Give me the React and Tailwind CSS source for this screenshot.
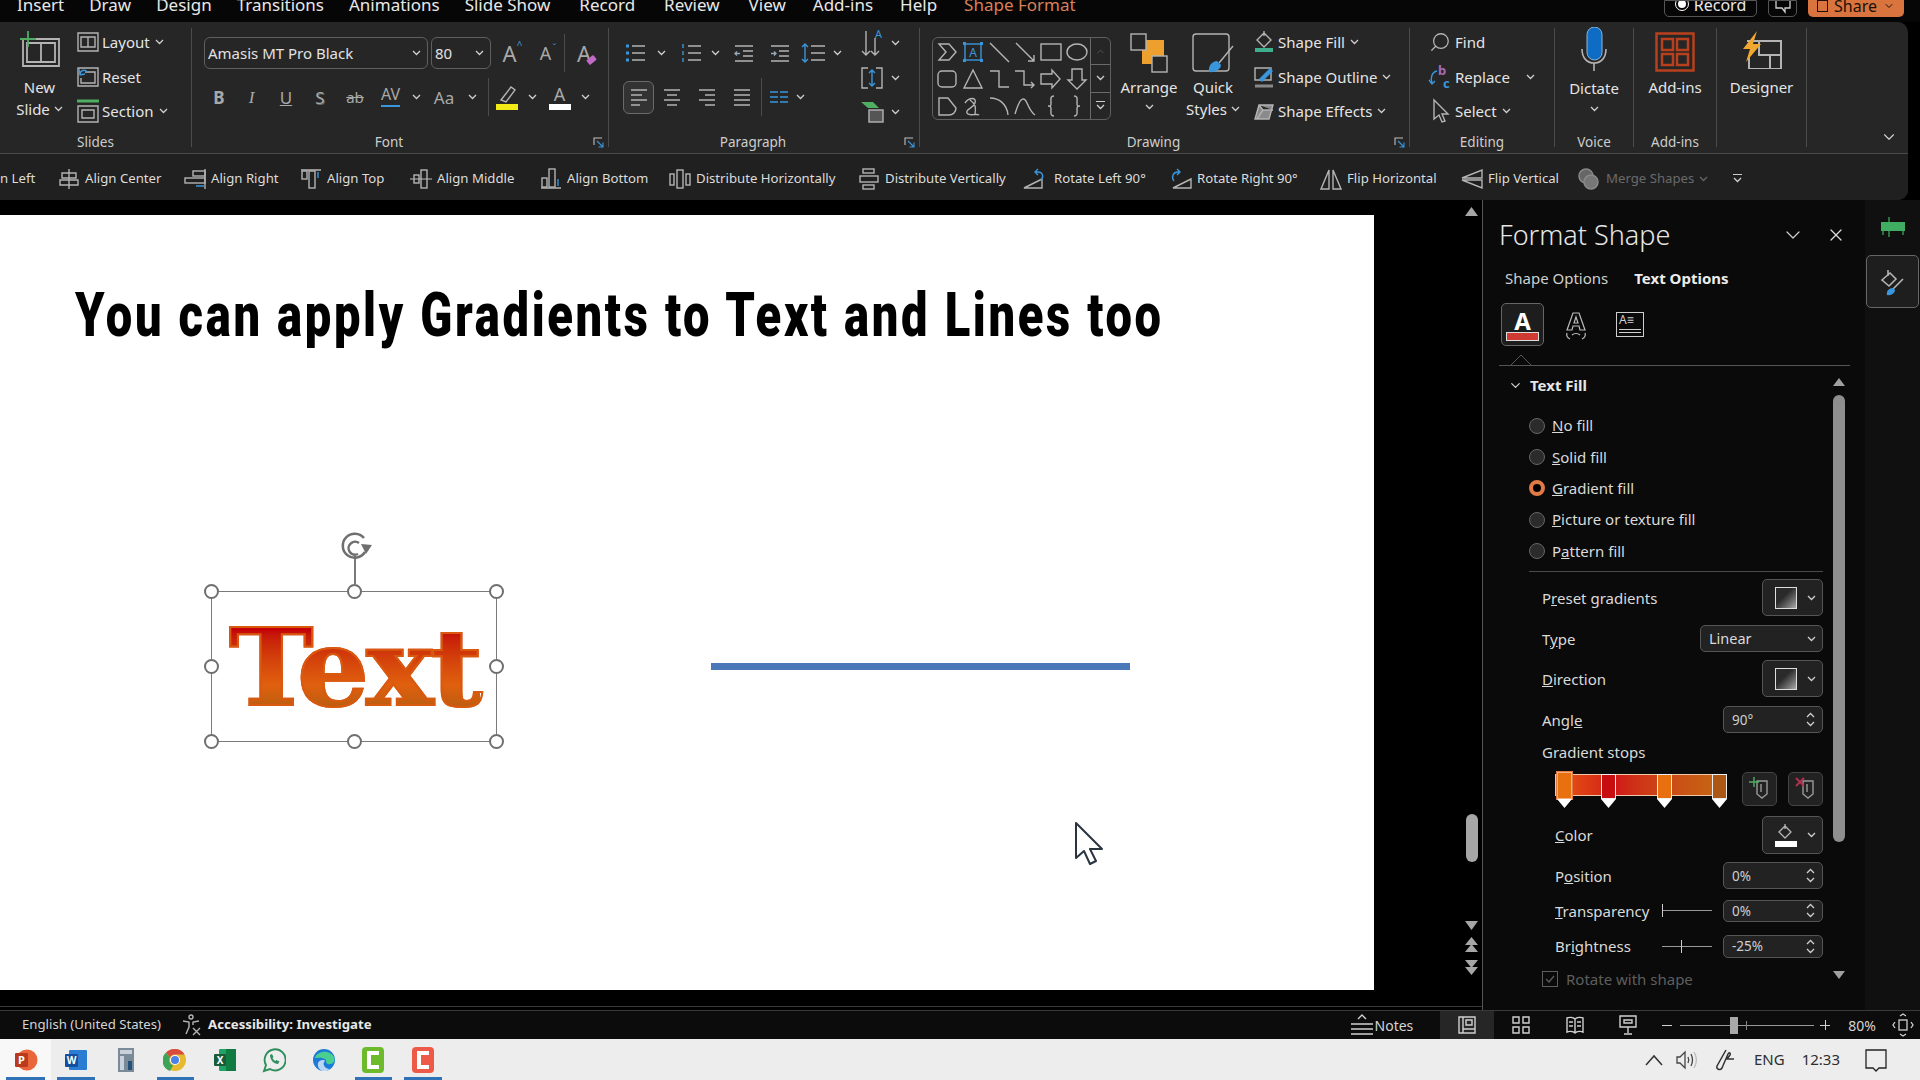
import React from "react";
import { ChevronDown, ChevronUp, X, Search } from "lucide-react";

const G = "#b4b4b4";
const B = "#3a96dc";

const Chev = ({ className = "" }) => (
  <svg width="9" height="6" viewBox="0 0 9 6" className={"shrink-0 " + className}>
    <path d="M1 1l3.5 3.5L8 1" fill="none" stroke="#cfcfcf" strokeWidth="1.3" />
  </svg>
);

const Ico = ({ w = 22, h = 22, children, className = "" }) => (
  <svg width={w} height={h} viewBox={`0 0 ${w} ${h}`} fill="none" stroke={G} strokeWidth="1.4" className={"shrink-0 " + className}>
    {children}
  </svg>
);

const Launcher = () => (
  <svg width="11" height="11" viewBox="0 0 11 11" fill="none" stroke="#c0c0c0" strokeWidth="1.1" className="absolute right-[4px] bottom-[-1px]">
    <path d="M1 8V1h8" />
    <path d="M4 4l5.5 5.5M10 5.5V10H5.5" stroke={B} />
  </svg>
);

function Group({ w, label, launcher, labelCls = "", children }) {
  return (
    <div className={"relative flex flex-col shrink-0 border-r border-[#4c4c4c] " + w}>
      <div className="flex-1 flex">{children}</div>
      <div className={"h-[12px] flex items-center justify-center text-[13.5px] text-[#cdcdcd] mb-[-1px] " + labelCls}>{label}</div>
      {launcher && <Launcher />}
    </div>
  );
}

const Row3 = ({ icon, text, chev = true, cls = "", iw = "w-[29px]" }) => (
  <div className={"h-[34.5px] flex items-center " + cls}>
    <span className={"flex justify-center " + iw}>{icon}</span>
    <span className="text-[15px] text-[#e4e4e4] mr-[5px] whitespace-nowrap">{text}</span>
    {chev && <Chev />}
  </div>
);

const Cell = ({ w, children }) => <div className={"flex items-center justify-center shrink-0 " + w}>{children}</div>;

const TB = ({ children, cls = "" }) => <span className={"text-[#a9a9a9] leading-none " + cls}>{children}</span>;

const ListIcon = ({ kind }) => (
  <Ico w={26} h={24}>
    {[5, 12, 19].map((y, i) => (
      <g key={y}>
        <path d={`M9 ${y}h13`} />
        {kind === "bullet" && <rect x="3" y={y - 1.5} width="3" height="3" fill={B} stroke="none" />}
        {kind === "number" && <path d={`M4 ${y - 2}v4`} stroke={B} />}
      </g>
    ))}
  </Ico>
);

const IndentIcon = ({ dir }) => (
  <Ico w={24} h={22}>
    <path d="M3 4h18M11 9h10M11 14h10M3 19h18" />
    <path d={dir === "in" ? "M3 11.5h5M6 9.5l2 2-2 2" : "M8 11.5H3M5 9.5l-2 2 2 2"} stroke="#8fa7b8" />
  </Ico>
);

const AlignIcon = ({ lines }) => (
  <Ico w={20} h={20}>
    {lines.map((d) => (
      <path key={d} d={d} strokeWidth="1.7" />
    ))}
  </Ico>
);

const shapes = [
  <path d="M3 3h10l7 8-7 8H3l7-8z" />,
  <g><rect x="3" y="3" width="16" height="16" stroke={B} /><text x="11" y="16" fontSize="12" textAnchor="middle" fill={B} stroke="none">A</text><rect x="1" y="1" width="3" height="3" fill={B} stroke="none" /><rect x="18" y="1" width="3" height="3" fill={B} stroke="none" /><rect x="1" y="18" width="3" height="3" fill={B} stroke="none" /><rect x="18" y="18" width="3" height="3" fill={B} stroke="none" /></g>,
  <path d="M2 2l19 19" />,
  <path d="M2 2l18 18M20 14v6h-6" />,
  <rect x="1" y="3" width="20" height="16" />,
  <ellipse cx="11" cy="11" rx="10" ry="8" />,
  <rect x="2" y="3" width="18" height="16" rx="4" />,
  <path d="M11 2l9 18H2z" />,
  <path d="M2 3h9v16h10" />,
  <path d="M1 3h9v14h10M17 14l3 3-3 3" />,
  <path d="M1 6h11V2l8 9-8 9v-4H1z" />,
  <path d="M6 1h10v11h4l-9 9-9-9h4z" />,
  <path d="M3 3h9l8 10c0 4-3 7-7 7H3z" />,
  <path d="M3 8c4-6 12-6 10 0s-10 6-8 10 10 0 12 2M8 5c6 4 6 8 5 14" />,
  <path d="M2 3c9 0 17 6 18 17" />,
  <path d="M1 19C6 2 10 1 13 8s5 10 8 12" />,
  <path d="M14 1c-4 0-3 3-3 7s-1 3-3 3c2 0 3 0 3 3s-1 7 3 7" />,
  <path d="M8 1c4 0 3 3 3 7s1 3 3 3c-2 0-3 0-3 3s1 7-3 7" />,
];

const qat = [
  ["w-[126px]", "gap-[5px]", "Align Center", <><path d="M11 1v20M4 5h14v5H4zM2 12h18v5H2z" /></>],
  ["w-[116px]", "gap-[5px]", "Align Right", <><path d="M21 1v20" /><rect x="9" y="3" width="12" height="5" /><rect x="1" y="10" width="20" height="5" /><path d="M12 18h8" stroke={B} /></>],
  ["w-[110px]", "gap-[5px]", "Align Top", <><path d="M1 2h20" /><rect x="2" y="3" width="5" height="8" /><rect x="9" y="3" width="6" height="17" /><path d="M18 10V4" stroke={B} /></>],
  ["w-[130px]", "gap-[5px]", "Align Middle", <><path d="M0 11h22" stroke="#8a8a8a" /><rect x="4" y="7" width="5" height="8" /><rect x="11" y="2" width="6" height="18" /></>],
  ["w-[129px]", "gap-[5px]", "Align Bottom", <><path d="M1 20h20" /><rect x="2" y="10" width="5" height="9" /><rect x="9" y="1" width="6" height="18" /><path d="M18 11v7" stroke={B} /></>],
  ["w-[189px]", "gap-[5px]", "Distribute Horizontally", <><rect x="1" y="6" width="4" height="11" /><rect x="8" y="2" width="6" height="18" /><rect x="17" y="6" width="4" height="11" /></>],
  ["w-[165px]", "gap-[5px]", "Distribute Vertically", <><rect x="5" y="1" width="11" height="4" /><rect x="2" y="8" width="18" height="6" /><rect x="5" y="17" width="11" height="4" /></>],
  ["w-[147px]", "gap-[9px]", "Rotate Left 90°", <><path d="M1 20L19 11v9z" /><path d="M18 12c3-3 2-8-3-8h-2M15 1l-3 3 3 3" stroke={B} /></>],
  ["w-[150px]", "gap-[5px]", "Rotate Right 90°", <><path d="M21 20L3 20l18-9z" /><path d="M4 13C1 9 3 4 8 4h2M7 1l3 3-3 3" stroke={B} /></>],
  ["w-[141px]", "gap-[5px]", "Flip Horizontal", <><path d="M9 2v19H1zM13 2v19h8z" /></>],
  ["w-[116px]", "gap-[5px]", "Flip Vertical", <><path d="M21 2v8H1zM21 20v-8H1z" /></>],
];

const Spin = ({ value }) => (
  <div className="w-[100px] h-full bg-[#222] border border-[#555] rounded-[5px] flex items-center justify-between pl-[8px] pr-[4px] text-[13.5px] text-[#cfcfcf]">
    <span>{value}</span>
    <span className="flex flex-col gap-[3px] mr-[3px]">
      <Chev className="rotate-180" />
      <Chev />
    </span>
  </div>
);

const DropBtn = ({ children }) => (
  <div className="w-[61px] h-full bg-[#222] border border-[#555] rounded-[5px] flex items-center justify-between pl-[12px] pr-[6px]">
    {children}
    <Chev />
  </div>
);

const GradSwatch = () => <div className="w-[22px] h-[22px] border border-[#ddd] bg-gradient-to-br from-[#2a2a2a] from-40% to-[#aaa]" />;

const Radio = ({ on, children }) => (
  <div className="h-[31.3px] flex items-center gap-[7px] pl-[30px] text-[15px] text-[#dadada]">
    <span className={on ? "w-[16px] h-[16px] rounded-full border-[4px] border-[#e07b45] bg-black" : "w-[16px] h-[16px] rounded-full border border-[#666] bg-[#2b2b2b]"} />
    <span>{children}</span>
  </div>
);

const FRow = ({ h, mt, indent = "pl-[43px]", label, children }) => (
  <div className={"flex items-center justify-between text-[15px] text-[#dadada] " + h + " " + mt + " " + indent}>
    <span className="whitespace-nowrap">{label}</span>
    {children}
  </div>
);

const Stop = ({ pos, color, selected }) => (
  <div className={"absolute flex flex-col items-center " + (selected ? "-top-[3px] " : "-top-[1px] ") + pos}>
    <div className={"w-[15px] border " + color + (selected ? " h-[27px] border-[#f4b183] outline outline-1 outline-[#e07b45]" : " h-[25px] border-[#eee]")} />
    <svg width="15" height="9" viewBox="0 0 15 9"><path d="M0 0h15L7.500 9z" fill="#fff" /></svg>
  </div>
);

const StopBtn = ({ color, mark }) => (
  <div className="w-[35px] h-[34px] bg-[#222] border border-[#444] rounded-[5px] flex items-center justify-center">
    <svg width="24" height="26" viewBox="0 0 24 26" fill="none" stroke="#9a9a9a" strokeWidth="1.4">
      <path d="M9 5h10v13l-5 4-5-4zM13 8v8" />
      {mark === "add" ? <path d="M1 6h10M6 1v10" stroke={color} /> : <path d="M2 2l8 8M10 2l-8 8" stroke={color} strokeWidth="2" />}
    </svg>
  </div>
);

const Task = ({ w = "w-[49.500px]", bar, active, children }) => (
  <div className={"relative h-full flex items-center justify-center shrink-0 " + w + (active ? " bg-[#f8f8f8]" : "")}>
    {children}
    {bar && <div className="absolute bottom-0 left-[6px] right-[6px] h-[3px] bg-[#2f72b8]" />}
  </div>
);

const menu = [
  ["Insert", ""],
  ["Draw", ""],
  ["Design", ""],
  ["Transitions", ""],
  ["Animations", ""],
  ["Slide Show", ""],
  ["Record", "ml-[4px]"],
  ["Review", "ml-[4px]"],
  ["View", "ml-[4px]"],
  ["Add-ins", "ml-[2px]"],
  ["Help", "ml-[2px]"],
  ["Shape Format", "ml-[2px] text-[#d9805a]"],
];

export default function App() {
  return (
    <div className="w-[1920px] h-[1080px] overflow-hidden flex flex-col bg-black [font-family:'Noto_Sans',sans-serif]">
      {/* title / tabs */}
      <div className="h-[22px] flex shrink-0 bg-[#060606] overflow-hidden">
        <div className="flex gap-[25px] pl-[17px] text-[17px] leading-[10px] h-[10px] text-[#e8e8e8]">
          {menu.map(([t, cls]) => (
            <span key={t} className={"whitespace-nowrap " + cls}>{t}</span>
          ))}
        </div>
        <div className="ml-auto mr-[16px] flex h-[17px] gap-[11px]">
          <div className="w-[93px] border border-[#555] rounded-b-[5px] flex items-end justify-center gap-[5px] overflow-hidden pb-[5px] text-[16px] leading-[12px] text-[#e8e8e8]">
            <span className="w-[14px] h-[14px] rounded-full border border-white flex items-center justify-center"><span className="w-[8px] h-[8px] rounded-full bg-white" /></span>
            Record
          </div>
          <div className="w-[29px] border border-[#555] rounded-b-[5px] flex items-end justify-center overflow-hidden pb-[2px]">
            <svg width="16" height="14" viewBox="0 0 16 14" fill="none" stroke="#cfcfcf" strokeWidth="1.300"><path d="M1 0v8h6l3 4V8h5V0" /></svg>
          </div>
          <div className="w-[96px] rounded-b-[5px] bg-[#d9743f] flex items-end justify-center gap-[6px] overflow-hidden pb-[5px] text-[16px] leading-[12px] text-[#201008]">
            <span className="w-[11px] h-[12px] border border-[#201008]" />
            Share
            <ChevronDown size={12} />
          </div>
        </div>
      </div>

      {/* ribbon */}
      <div className="h-[178px] w-[1908px] shrink-0 flex flex-col rounded-r-[10px] overflow-hidden bg-[#262626]">
        <div className="h-[132px] shrink-0 py-[6px] flex relative border-b border-[#4a4a4a]">
          <Group w="w-[192px]" label="Slides">
            <div className="w-[76px] shrink-0 flex flex-col items-center pl-[3px] text-[15px] leading-[22px] text-[#e4e4e4]">
              <Ico w={42} h={36} className="mt-[3px]">
                <path d="M4 8h36v27H4zM8 12h28v19H8zM22 12v19" strokeWidth="1.800" />
                <path d="M9 0v16M1 8h16" stroke="#4fae62" strokeWidth="1.800" />
              </Ico>
              <span className="mt-[9px]">New</span>
              <span className="flex items-center gap-[4px]">Slide <Chev /></span>
            </div>
            <div className="-mt-[3px] -ml-[3px]">
              <Row3 text="Layout" icon={<Ico w={24} h={22}><path d="M2 2h20v18H2zM5 6h14v10H5zM12 6v10" /></Ico>} />
              <Row3 text="Reset" chev={false} icon={<Ico w={24} h={22}><path d="M2 2h20v18H2zM9 6h10v11H5v-5" /><path d="M4 9c0-5 5-6 7-3M3 3l1 6 5-1" stroke={B} /></Ico>} />
              <Row3 text="Section" icon={<Ico w={24} h={26}><path d="M1 3h22" stroke="#4fae62" strokeWidth="3" /><path d="M2 8h20v16H2zM6 12h12v8H6z" /></Ico>} />
            </div>
          </Group>

          <Group w="w-[417px]" label="Font" launcher labelCls="pr-[22px]">
            <div className="flex flex-col pt-[9px] pl-[12px]">
              <div className="flex items-center h-[32px]">
                <div className="w-[224px] h-full border border-[#5f5f5f] rounded-[6px] flex items-center justify-between pl-[3px] pr-[6px] text-[15px] text-[#e2e2e2]">
                  Amasis MT Pro Black <Chev />
                </div>
                <div className="ml-[3px] w-[60px] h-full border border-[#5f5f5f] rounded-[6px] flex items-center justify-between pl-[3px] pr-[6px] text-[15px] text-[#e2e2e2]">
                  80 <Chev />
                </div>
                <Cell w="w-[37px]"><TB cls="text-[22px] relative">A<span className="absolute -right-[6px] -top-[2px] text-[10px] text-[#4a9ad6]">^</span></TB></Cell>
                <Cell w="w-[35px]"><TB cls="text-[18px] relative">A<span className="absolute -right-[5px] -top-[1px] text-[9px] text-[#4a9ad6]">ˇ</span></TB></Cell>
                <div className="w-px h-[38px] bg-[#4c4c4c] mx-[1px]" />
                <Cell w="w-[36px]"><TB cls="text-[22px] relative">A<span className="absolute -right-[5px] bottom-[1px] w-[9px] h-[6px] rotate-[-40deg] rounded-[1px] bg-[#c269c8]" /></TB></Cell>
              </div>
              <div className="flex items-center h-[42px] mt-[7px]">
                <Cell w="w-[30px]"><TB cls="font-bold text-[17px]">B</TB></Cell>
                <Cell w="w-[35px]"><TB cls="italic text-[17px] [font-family:'Liberation_Serif',serif]">I</TB></Cell>
                <Cell w="w-[34px]"><TB cls="underline text-[17px]">U</TB></Cell>
                <Cell w="w-[34px]"><TB cls="text-[17px] [text-shadow:1px_1px_0_#666]">S</TB></Cell>
                <Cell w="w-[36px]"><TB cls="line-through text-[15px]">ab</TB></Cell>
                <Cell w="w-[35px]"><TB cls="text-[16px] relative -top-[3px]">AV<span className="absolute left-0 right-0 -bottom-[5px] h-[2px] bg-[#3a96dc]" /></TB></Cell>
                <Cell w="w-[16px]"><Chev /></Cell>
                <Cell w="w-[40px]"><TB cls="text-[17px]">Aa</TB></Cell>
                <Cell w="w-[17px]"><Chev /></Cell>
                <div className="w-px h-[38px] bg-[#4c4c4c] mx-[7px]" />
                <Cell w="w-[22px]">
                  <Ico w={22} h={26}><path d="M5 16L15 3l4 3L10 18z" /><rect x="0" y="20" width="22" height="6" fill="#f2ea16" stroke="none" /></Ico>
                </Cell>
                <Cell w="w-[28px]"><Chev /></Cell>
                <Cell w="w-[27px]">
                  <div className="flex flex-col items-center"><TB cls="text-[18px]">A</TB><span className="w-[22px] h-[6px] bg-white mt-[1px]" /></div>
                </Cell>
                <Cell w="w-[24px]"><Chev /></Cell>
              </div>
            </div>
          </Group>

          <Group w="w-[311px]" label="Paragraph" launcher labelCls="pr-[22px]">
            <div className="flex flex-col pt-[9px] pl-[14px] w-[240px]">
              <div className="flex items-center h-[32px]">
                <ListIcon kind="bullet" /><Cell w="w-[24px]"><Chev /></Cell>
                <Cell w="w-[6px]" /><ListIcon kind="number" /><Cell w="w-[20px]"><Chev /></Cell>
                <Cell w="w-[38px]"><IndentIcon dir="out" /></Cell>
                <Cell w="w-[34px]"><IndentIcon dir="in" /></Cell>
                <Cell w="w-[34px]">
                  <Ico w={26} h={24}><path d="M10 5h14M10 12h14M10 19h14" /><path d="M4 3v18M1 6l3-3 3 3M1 18l3 3 3-3" stroke={B} /></Ico>
                </Cell>
                <Cell w="w-[12px]"><Chev /></Cell>
              </div>
              <div className="flex items-center h-[42px] mt-[7px]">
                <div className="w-[31px] h-[33px] rounded-[6px] border border-[#6a6a6a] bg-[#333] flex items-center justify-center">
                  <AlignIcon lines={["M2 3h16", "M2 8h11", "M2 13h16", "M2 18h9"]} />
                </div>
                <Cell w="w-[35px]"><AlignIcon lines={["M2 3h16", "M5 8h10", "M2 13h16", "M5 18h10"]} /></Cell>
                <Cell w="w-[35px]"><AlignIcon lines={["M2 3h16", "M8 8h10", "M2 13h16", "M8 18h10"]} /></Cell>
                <Cell w="w-[35px]"><AlignIcon lines={["M2 3h16", "M2 8h16", "M2 13h16", "M2 18h16"]} /></Cell>
                <div className="w-px h-[38px] bg-[#4c4c4c] ml-[2px] mr-[8px]" />
                <Ico w={18} h={14}><path d="M0 2h8M0 7h8M0 12h8M10 2h8M10 7h8M10 12h8" stroke={B} strokeWidth="1.600" /></Ico>
                <Cell w="w-[24px]"><Chev /></Cell>
              </div>
            </div>
            <div className="-mt-[2px] pl-[11px]">
              {[
                <Ico w={24} h={30} key="1"><path d="M6 3v24M2 23l4 4 4-4M15 10v17M11 23l4 4 4-4" /><text x="15" y="10" fontSize="11" fill={B} stroke="none">A</text></Ico>,
                <Ico w={24} h={26} key="2"><path d="M8 3H2v20h6M16 3h6v20h-6" /><path d="M12 6v14M9 8l3-3 3 3M9 18l3 3 3-3" stroke={B} /></Ico>,
                <Ico w={24} h={26} key="3"><path d="M1 3h12l6 6H8z" fill="#4fae62" stroke="none" /><rect x="9" y="11" width="14" height="12" fill="#555" /></Ico>,
              ].map((ic, i) => (
                <div key={i} className="h-[34.500px] flex items-center gap-[7px]">{ic}<Chev /></div>
              ))}
            </div>
          </Group>

          <Group w="w-[490px]" label="Drawing" launcher labelCls="pr-[22px]">
            <div className="ml-[12px] mt-[9px] w-[179px] h-[83px] shrink-0 border border-[#5f5f5f] rounded-[6px] flex">
              <div className="flex-1 grid grid-cols-6 items-center justify-items-center pl-[1px]">
                {shapes.map((s, i) => (
                  <Ico key={i} w={22} h={22}>{s}</Ico>
                ))}
              </div>
              <div className="w-[20px] border-l border-[#6a6a6a] flex flex-col">
                <div className="flex-1 flex items-center justify-center"><ChevronUp size={11} color="#555" /></div>
                <div className="flex-1 flex items-center justify-center border-y border-[#6a6a6a]"><Chev /></div>
                <div className="flex-1 flex flex-col items-center justify-center gap-[2px]"><span className="w-[9px] h-px bg-[#ccc]" /><Chev /></div>
              </div>
            </div>
            <div className="w-[78px] shrink-0 ml-[-1px] flex flex-col items-center text-[15px] leading-[22px] text-[#e4e4e4]">
              <Ico w={42} h={42} className="mt-[4px]">
                <rect x="14" y="8" width="22" height="24" fill="#eda02d" stroke="none" />
                <rect x="3" y="2" width="15" height="16" fill="#262626" />
                <rect x="24" y="24" width="15" height="16" fill="#262626" />
              </Ico>
              <span className="mt-[2px]">Arrange</span>
              <Chev className="mt-[6px]" />
            </div>
            <div className="w-[50px] shrink-0 flex flex-col items-center text-[15px] leading-[22px] text-[#e4e4e4]">
              <Ico w={44} h={42} className="mt-[4px]">
                <rect x="2" y="2" width="36" height="37" rx="3" />
                <path d="M42 14L28 31" />
                <path d="M18 40c-1-6 3-11 8-11l4 4c0 4-6 8-12 7z" fill={B} stroke="none" />
              </Ico>
              <span className="mt-[2px]">Quick</span>
              <span className="flex items-center gap-[4px] whitespace-nowrap">Styles <Chev /></span>
            </div>
            <div className="-mt-[3px] ml-[11px]">
              <Row3 text="Shape Fill" icon={<Ico w={22} h={24}><path d="M4 10l7-7 7 7-7 7zM11 1v5" /><path d="M2 20h18" stroke="#3fae8c" strokeWidth="4" /></Ico>} />
              <Row3 text="Shape Outline" icon={<Ico w={22} h={24}><path d="M2 3h16v12H2z" /><path d="M6 14L17 3l3 3L9 17z" fill={B} stroke="none" /><path d="M2 21h18" stroke="#888" strokeWidth="3" /></Ico>} />
              <Row3 text="Shape Effects" icon={<Ico w={22} h={22}><path d="M6 5h14l-4 14H2zM6 5l4 5h10M10 10l-6 9" fill="#8a8a8a" /></Ico>} />
            </div>
          </Group>

          <Group w="w-[145px]" label="Editing">
            <div className="-mt-[3px] pl-[14px]">
              <Row3 iw="w-[31px]" text="Find" chev={false} icon={<Search size={22} color={G} strokeWidth={1.400} className="-scale-x-100" />} />
              <div className="flex items-center h-[34.500px]">
                <span className="w-[31px] flex justify-center">
                  <svg width="24" height="26" viewBox="0 0 24 26" fill="none" strokeWidth="1.400">
                    <text x="10" y="11" fontSize="13" fontWeight="700" fill="#a56bb5" stroke="none">b</text>
                    <text x="15" y="24" fontSize="13" fontWeight="700" fill={B} stroke="none">c</text>
                    <path d="M9 7C4 8 2 14 4 19M1 16l3 4 3-3" stroke={B} />
                  </svg>
                </span>
                <span className="text-[15px] text-[#e4e4e4]">Replace</span>
                <Chev className="ml-[16px]" />
              </div>
              <Row3 iw="w-[31px]" text="Select" icon={<Ico w={20} h={26}><path d="M4 2v19l5-4 3 7 3-1-3-7h6z" /></Ico>} />
            </div>
          </Group>

          <Group w="w-[79px]" label="Voice">
            <div className="w-full flex flex-col items-center text-[15px] text-[#e4e4e4] leading-[22px]">
              <svg width="28" height="44" viewBox="0 0 28 44" fill="none" className="-mt-[1px]">
                <rect x="7" y="0" width="15" height="33" rx="7.500" fill="#0f6cc4" stroke="#8ab8e0" />
                <path d="M2 22c0 9 5 14 12 14s12-5 12-14M14 36v8" stroke={G} strokeWidth="1.600" />
              </svg>
              <span className="mt-[6px]">Dictate</span>
              <Chev className="mt-[7px]" />
            </div>
          </Group>

          <Group w="w-[83px]" label="Add-ins">
            <div className="w-full flex flex-col items-center text-[15px] text-[#e4e4e4] leading-[22px]">
              <svg width="40" height="40" viewBox="0 0 40 40" fill="none" stroke="#b8401c" strokeWidth="2.500" className="mt-[4px]">
                <rect x="1.500" y="1.500" width="37" height="37" />
                <rect x="7" y="7" width="11" height="11" />
                <rect x="22" y="7" width="11" height="11" />
                <rect x="7" y="22" width="11" height="11" />
                <rect x="22" y="22" width="11" height="11" />
              </svg>
              <span className="mt-[4px]">Add-ins</span>
            </div>
          </Group>

          <Group w="w-[90px]" label="">
            <div className="w-full flex flex-col items-center text-[15px] text-[#e4e4e4] leading-[22px]">
              <svg width="42" height="38" viewBox="0 0 42 38" fill="none" className="mt-[3px]">
                <path d="M6 10h34v28H8V26M18 10v14h22M29 24v14" stroke={G} strokeWidth="2" />
                <path d="M16 0L2 18h7l-4 13 15-18h-8z" fill="#f0a92e" />
              </svg>
              <span className="mt-[7px]">Designer</span>
            </div>
          </Group>

          <div className="flex-1 flex items-end justify-end pr-[10px] pb-[1px]">
            <ChevronDown size={18} color="#d0d0d0" strokeWidth={1.500} />
          </div>
        </div>

        {/* quick access row */}
        <div className="flex-1 pt-[3px] bg-[#202020] flex items-center text-[13.2px] text-[#dcdcdc] whitespace-nowrap">
          <span className="w-[58px] shrink-0">n Left</span>
          {qat.map(([w, gap, label, ic]) => (
            <div key={label} className={"flex items-center shrink-0 " + w + " " + gap}>
              <Ico>{ic}</Ico>
              {label}
            </div>
          ))}
          <div className="flex items-center gap-[5px] w-[156px] shrink-0 text-[#6a6a6a]">
            <svg width="24" height="24" viewBox="0 0 24 24" fill="none" stroke="#8a8a8a" strokeWidth="1.500">
              <circle cx="9" cy="9" r="7" fill="#666" />
              <circle cx="14" cy="15" r="7" fill="#777" />
            </svg>
            Merge Shapes
            <Chev className="opacity-40" />
          </div>
          <div className="flex flex-col items-center gap-[2px]">
            <span className="w-[9px] h-px bg-[#ccc]" />
            <Chev />
          </div>
        </div>
      </div>

      {/* work area */}
      <div className="h-[810px] shrink-0 flex">
        <div className="w-[1483px] shrink-0 flex flex-col border-r border-[#555] bg-black">
          <div className="h-[807px] flex border-b border-[#3a3a3a]">
            <div className="w-[1462px] shrink-0 pt-[15px]">
              <div className="relative w-[1374px] h-[775px] bg-white overflow-hidden">
                <div className="pt-[55px] pl-[75px]">
                  <h1 className="origin-left scale-x-[0.76] whitespace-nowrap text-[62px] leading-[90px] font-black text-black tracking-[3.5px] [font-family:Roboto,sans-serif]">
                    You can apply Gradients to Text and Lines too
                  </h1>
                </div>

                {/* selected text box */}
                <div className="absolute left-[211px] top-[376px] w-[286px] h-[151px] border-[1.5px] border-[#7a7a7a] flex items-center justify-center">
                  <span className="scale-x-[1.06] pt-[3px] text-[107px] leading-[120px] font-bold tracking-[-3px] [-webkit-text-stroke:2px_#d9590f] [font-family:'DejaVu_Serif',serif] bg-gradient-to-b from-[#c40008] from-20% via-[#e0600e] via-65% to-[#b85c10] to-85% bg-clip-text text-transparent">
                    Text
                  </span>
                  {["-left-[8px] -top-[8px]", "left-[135px] -top-[8px]", "-right-[8px] -top-[8px]", "-left-[8px] top-[67px]", "-right-[8px] top-[67px]", "-left-[8px] -bottom-[8px]", "left-[135px] -bottom-[8px]", "-right-[8px] -bottom-[8px]"].map((p) => (
                    <span key={p} className={"absolute w-[15px] h-[15px] rounded-full bg-white border-2 border-[#6f6f6f] " + p} />
                  ))}
                  <span className="absolute left-[142px] -top-[36px] w-[1.500px] h-[28px] bg-[#7a7a7a]" />
                  <svg width="36" height="30" viewBox="0 0 36 30" fill="none" stroke="#6f6f6f" strokeWidth="2.500" className="absolute left-[126px] -top-[61px]">
                    <path d="M27 21A12 12 0 1 1 26 7M20 23A6.500 6.500 0 1 1 21 12" />
                    <path d="M23 13l11 1-6 9z" fill="#6f6f6f" stroke="none" />
                  </svg>
                </div>

                {/* line */}
                <div className="absolute left-[711px] top-[448px] w-[419px] h-[7px] bg-[#4a78b8]" />

                {/* mouse cursor */}
                <svg width="32" height="44" viewBox="0 0 32 44" className="absolute left-[1074px] top-[606px]">
                  <path d="M2 2v35l8-7 6 13 6-3-6-12h12z" fill="#fff" stroke="#2a3440" strokeWidth="2" strokeLinejoin="round" />
                </svg>
              </div>
            </div>

            {/* slide scroll bar */}
            <div className="w-[19px] shrink-0 flex flex-col items-center pt-[7px]">
              <svg width="13" height="9" viewBox="0 0 13 9"><path d="M6.500 0l6.500 9H0z" fill="#a6a6a6" /></svg>
              <div className="mt-[598px] w-[12px] h-[48px] rounded-full bg-[#a6a6a6]" />
              <svg width="13" height="9" viewBox="0 0 13 9" className="mt-[59px]"><path d="M0 0h13L6.500 9z" fill="#a6a6a6" /></svg>
              <svg width="13" height="16" viewBox="0 0 13 16" className="mt-[7px]"><path d="M6.500 0L13 8H0zM6.500 7L13 15H0z" fill="#a6a6a6" /></svg>
              <svg width="13" height="16" viewBox="0 0 13 16" className="mt-[6px]"><path d="M0 1h13L6.500 9zM0 8h13L6.500 16z" fill="#a6a6a6" /></svg>
            </div>
          </div>
        </div>

        {/* format pane */}
        <div className="w-[382px] shrink-0 bg-[#0a0a0a] flex flex-col">
          <div className="h-[30px] mt-[20px] pl-[16px] pr-[19px] flex items-center justify-between">
            <span className="text-[27px] font-light text-[#e6e6e6]">Format Shape</span>
            <span className="flex items-center gap-[21px]">
              <ChevronDown size={24} color="#cfcfcf" strokeWidth={1.200} />
              <X size={20} color="#dcdcdc" strokeWidth={1.500} />
            </span>
          </div>
          <div className="h-[22px] mt-[17px] pl-[22px] flex items-center gap-[26px] text-[15px]">
            <span className="text-[#cfcfcf]">Shape Options</span>
            <span className="font-bold text-[#ececec]">Text Options</span>
          </div>
          <div className="h-[43px] mt-[14px] pl-[18px] flex items-center">
            <div className="w-[43px] h-[43px] rounded-[5px] border border-[#666] bg-[#1d1d1d] flex flex-col items-center justify-end pb-[4px]">
              <span className="text-[24px] leading-[22px] font-bold text-white">A</span>
              <span className="w-[33px] h-[9px] bg-[#cf3a32] border border-[#ddd]" />
            </div>
            <Ico w={24} h={30} className="ml-[20px]">
              <path d="M9 3h6l6 17h-5l-1-4H9l-1 4H3zM10 13h4l-2-6z" stroke="#bbb" strokeWidth="1.200" />
              <path d="M3 23c-1 3 1 5 3 6M21 23c1 3-1 5-3 6M8 25c2-2 6-2 8 0" stroke="#bbb" strokeWidth="1.200" />
            </Ico>
            <div className="ml-[28px] w-[28px] h-[25px] border border-[#cfcfcf] flex flex-col items-start px-[2px] text-[12px] leading-[14px] text-[#cfcfcf]">
              <span>A≡</span>
              <span className="w-full h-px bg-[#cfcfcf] mt-[2px]" />
              <span className="w-full h-px bg-[#cfcfcf] mt-[2px]" />
            </div>
          </div>
          <div className="relative h-px mt-[19px] ml-[16px] w-[351px] bg-[#555]">
            <svg width="20" height="10" viewBox="0 0 20 10" className="absolute left-[12px] -top-[10px]"><path d="M0 10L10 0l10 10" fill="#0a0a0a" stroke="#555" /></svg>
          </div>

          <div className="flex">
            <div className="w-[340px] shrink-0 pl-[16px]">
              <div className="h-[20px] mt-[9px] pl-[9px] flex items-center gap-[7px] text-[15px] font-bold text-[#e6e6e6]">
                <ChevronDown size={15} strokeWidth={2} color="#d0d0d0" />
                Text Fill
              </div>
              <div className="mt-[15px]">
                <Radio><u>N</u>o fill</Radio>
                <Radio><u>S</u>olid fill</Radio>
                <Radio on><u>G</u>radient fill</Radio>
                <Radio><u>P</u>icture or texture fill</Radio>
                <Radio>P<u>a</u>ttern fill</Radio>
              </div>
              <div className="h-px mt-[5px] ml-[30px] bg-[#4a4a4a]" />

              <FRow h="h-[37px]" mt="mt-[7px]" label={<>P<u>r</u>eset gradients</>}>
                <DropBtn><GradSwatch /></DropBtn>
              </FRow>
              <FRow h="h-[27px]" mt="mt-[9px]" label={<>T<u>y</u>pe</>}>
                <div className="w-[123px] h-full bg-[#222] border border-[#555] rounded-[5px] flex items-center justify-between pl-[8px] pr-[6px] text-[14.5px] text-[#dadada]">
                  Linear <Chev />
                </div>
              </FRow>
              <FRow h="h-[37px]" mt="mt-[8px]" label={<><u>D</u>irection</>}>
                <DropBtn><GradSwatch /></DropBtn>
              </FRow>
              <FRow h="h-[27px]" mt="mt-[9px]" label={<>Angl<u>e</u></>}>
                <Spin value="90°" />
              </FRow>
              <FRow h="h-[20px]" mt="mt-[9px]" label="Gradient stops" />

              <div className="h-[35px] mt-[10px] pl-[56px] flex items-start justify-between">
                <div className="relative mt-[2px] w-[172px] h-[22px] border border-[#f0c8a8] bg-gradient-to-r from-[#e8560e] via-[#d01818] via-35% to-[#c46a12]">
                  <Stop pos="left-[1px]" color="bg-[#e8700e]" selected />
                  <Stop pos="left-[45px]" color="bg-[#c80d10]" />
                  <Stop pos="left-[101px]" color="bg-[#e8700e]" />
                  <Stop pos="left-[156px]" color="bg-[#ac5714]" />
                </div>
                <div className="flex gap-[11px]">
                  <StopBtn color="#4fae62" mark="add" />
                  <StopBtn color="#b03050" mark="del" />
                </div>
              </div>

              <FRow h="h-[38px]" mt="mt-[9px]" indent="pl-[56px]" label={<><u>C</u>olor</>}>
                <DropBtn>
                  <div className="flex flex-col items-center">
                    <Ico w={22} h={17}><path d="M4 8l6-6 6 6-6 6zM10 0v5" strokeWidth="1.300" /></Ico>
                    <span className="w-[22px] h-[6px] bg-white" />
                  </div>
                </DropBtn>
              </FRow>
              <FRow h="h-[27px]" mt="mt-[8px]" indent="pl-[56px]" label={<>P<u>o</u>sition</>}>
                <Spin value="0%" />
              </FRow>
              <div className="h-[27px] mt-[8px] pl-[56px] flex items-center justify-between text-[15px] text-[#dadada]">
                <span><u>T</u>ransparency</span>
                <div className="flex items-center gap-[11px]">
                  <div className="relative w-[50px] h-px bg-[#999]"><span className="absolute left-0 -top-[6px] w-px h-[13px] bg-[#ccc]" /></div>
                  <Spin value="0%" />
                </div>
              </div>
              <div className="h-[28px] mt-[8px] pl-[56px] flex items-center justify-between text-[15px] text-[#dadada]">
                <span>Br<u>i</u>ghtness</span>
                <div className="flex items-center gap-[11px]">
                  <div className="relative w-[50px] h-px bg-[#999]"><span className="absolute left-[19px] -top-[6px] w-px h-[13px] bg-[#ccc]" /></div>
                  <Spin value="-25%" />
                </div>
              </div>
              <div className="h-[20px] mt-[9px] pl-[43px] flex items-center gap-[8px] text-[15px] text-[#5e5e5e]">
                <span className="w-[16px] h-[16px] border border-[#5e5e5e] flex items-center justify-center">
                  <svg width="10" height="8" viewBox="0 0 10 8" fill="none" stroke="#5e5e5e" strokeWidth="1.300"><path d="M1 4l3 3 5-6" /></svg>
                </span>
                Rotate with shape
              </div>
            </div>
            <div className="ml-[10px] w-[12px] flex flex-col items-center pt-[12px]">
              <svg width="12" height="8" viewBox="0 0 12 8"><path d="M6 0l6 8H0z" fill="#a0a0a0" /></svg>
              <div className="mt-[9px] w-[12px] h-[447px] rounded-full bg-[#8e8e8e]" />
              <svg width="12" height="8" viewBox="0 0 12 8" className="mt-[129px]"><path d="M0 0h12L6 8z" fill="#a0a0a0" /></svg>
            </div>
          </div>
        </div>

        {/* right strip */}
        <div className="w-[55px] shrink-0 bg-[#101010] flex flex-col items-center pt-[17px]">
          <svg width="26" height="20" viewBox="0 0 26 20"><rect x="1" y="5" width="24" height="9" fill="#3fae62" /><path d="M9 0v20M3 14v4M23 14v4" stroke="#3fae62" strokeWidth="1.200" /></svg>
          <div className="mt-[18px] w-[53px] h-[53px] rounded-[5px] border border-[#666] bg-[#1e1e1e] flex items-center justify-center">
            <svg width="28" height="28" viewBox="0 0 28 28" fill="none" stroke="#b4b4b4" strokeWidth="1.600">
              <path d="M3 12l8-7 6 6-7 7zM9 2v6" />
              <path d="M24 11L14 21" />
              <path d="M8 27c-1-4 2-7 6-7l2 2c0 3-4 6-8 5z" fill={B} stroke="none" />
            </svg>
          </div>
        </div>
      </div>

      {/* status bar */}
      <div className="h-[29px] shrink-0 bg-[#0c0c0c] border-t border-[#3a3a3a] flex items-center text-[13.2px] text-[#d4d4d4]">
        <span className="ml-[22px]">English (United States)</span>
        <Ico w={22} h={22} className="ml-[20px]">
          <circle cx="10" cy="3" r="2" />
          <path d="M2 7l6 1v5l-3 7M18 7l-6 1v3M12 14l7 7M19 14l-7 7" />
        </Ico>
        <span className="ml-[5px] font-bold text-[#e8e8e8]">Accessibility: Investigate</span>

        <div className="ml-auto flex items-center h-full">
          <svg width="24" height="22" viewBox="0 0 24 22" fill="none" stroke="#d0d0d0" strokeWidth="1.400">
            <path d="M1 10h22M1 15h22M1 20h22M8 5l4-4 4 4" />
          </svg>
          <span className="ml-[1px] mr-[27px] text-[14px]">Notes</span>
          <div className="w-[54px] h-full bg-[#262626] flex items-center justify-center">
            <Ico w={20} h={20}><path d="M2 2h16v16H2zM6 2v16M9 5h6v5H9zM6 14h12" stroke="#d0d0d0" /></Ico>
          </div>
          <div className="w-[54px] flex justify-center">
            <Ico w={20} h={20}><path d="M2 2h6v6H2zM12 2h6v6h-6zM2 12h6v6H2zM12 12h6v6h-6z" stroke="#d0d0d0" /></Ico>
          </div>
          <div className="w-[53px] flex justify-center">
            <Ico w={20} h={20}><path d="M10 4C8 2 4 2 2 3v14c2-1 6-1 8 1 2-2 6-2 8-1V3c-2-1-6-1-8 1zM10 4v14M4 7h4M4 11h4M12 7h4M12 11h4" stroke="#d0d0d0" /></Ico>
          </div>
          <div className="w-[53px] flex justify-center">
            <Ico w={20} h={22}><path d="M2 2h16v11H2zM10 13v6M6 20h8M6 6h8v3H6z" stroke="#d0d0d0" /></Ico>
          </div>
          <span className="ml-[8px] w-[10px] h-px bg-[#d0d0d0]" />
          <div className="relative ml-[8px] w-[134px] h-px bg-[#999]">
            <span className="absolute left-[50px] -top-[8px] w-[8px] h-[17px] bg-[#a8a8a8]" />
            <span className="absolute left-[66px] -top-[4px] w-px h-[9px] bg-[#888]" />
          </div>
          <span className="relative ml-[6px] w-[10px] h-px bg-[#d0d0d0]"><span className="absolute left-[4.500px] -top-[4.500px] w-px h-[10px] bg-[#d0d0d0]" /></span>
          <span className="ml-[18px] mr-[16px] text-[14px]">80%</span>
          <svg width="22" height="24" viewBox="0 0 22 24" fill="none" stroke="#d0d0d0" strokeWidth="1.300" className="mr-[6px]">
            <rect x="7" y="7" width="8" height="10" />
            <path d="M8 3l3-2 3 2M8 21l3 2 3-2M3 9l-2 3 2 3M19 9l2 3-2 3" />
          </svg>
        </div>
      </div>

      {/* taskbar */}
      <div className="h-[41px] shrink-0 bg-[#eeedee] flex items-center">
        <Task w="w-[51px]" active bar>
          <svg width="24" height="24" viewBox="0 0 24 24">
            <circle cx="13" cy="12" r="10.500" fill="#e9663a" />
            <rect x="1" y="5" width="13" height="14" rx="1" fill="#bb3a1e" />
            <text x="7.500" y="16" fontSize="11" fontWeight="700" fill="#fff" textAnchor="middle">P</text>
          </svg>
        </Task>
        <Task w="w-[50px]" bar>
          <svg width="24" height="24" viewBox="0 0 24 24">
            <rect x="5" y="2" width="18" height="20" rx="1" fill="#2b7cd3" />
            <rect x="1" y="6" width="13" height="13" rx="1" fill="#12509f" />
            <text x="7.500" y="16" fontSize="10" fontWeight="700" fill="#fff" textAnchor="middle">W</text>
          </svg>
        </Task>
        <Task>
          <svg width="18" height="26" viewBox="0 0 18 26">
            <rect x="1" y="1" width="16" height="24" fill="#7b8a99" />
            <rect x="3" y="3" width="12" height="4" fill="#c9d2da" />
            <rect x="3" y="9" width="4" height="14" fill="#c9d2da" />
            <rect x="11" y="14" width="4" height="9" fill="#24507a" />
          </svg>
        </Task>
        <Task bar>
          <svg width="24" height="24" viewBox="0 0 24 24">
            <circle cx="12" cy="12" r="11" fill="#e6b92f" />
            <path d="M12 1a11 11 0 0 1 9.500 5.500H12a5.500 5.500 0 0 0-5 3L3 4.500A11 11 0 0 1 12 1z" fill="#d94c3d" />
            <path d="M3 4.500L7 9.500a5.500 5.500 0 0 0 3 8L7 23A11 11 0 0 1 3 4.500z" fill="#3ea355" />
            <circle cx="12" cy="12" r="5" fill="#fff" />
            <circle cx="12" cy="12" r="4" fill="#4a80e8" />
          </svg>
        </Task>
        <Task>
          <svg width="24" height="24" viewBox="0 0 24 24">
            <rect x="6" y="1" width="17" height="22" rx="1" fill="#21a366" />
            <rect x="13" y="1" width="10" height="22" fill="#107c41" />
            <rect x="1" y="6" width="12" height="12" rx="1" fill="#185c37" />
            <text x="7" y="15.500" fontSize="10" fontWeight="700" fill="#fff" textAnchor="middle">X</text>
          </svg>
        </Task>
        <Task>
          <svg width="24" height="26" viewBox="0 0 24 26" fill="none" stroke="#2f8f5c" strokeWidth="1.900">
            <path d="M2 24l2-6A10.500 10.500 0 1 1 8 22z" />
            <path d="M8 8c0 5 4 9 8 9l1.500-2.500-3-1.500-1 1c-1.500-.6-2.500-2-3-3l1-1-1.500-3z" fill="#2f8f5c" stroke="none" />
          </svg>
        </Task>
        <Task>
          <svg width="24" height="24" viewBox="0 0 24 24">
            <circle cx="12" cy="12" r="11" fill="#1c7ad8" />
            <path d="M3 10C5 3 17 1 22 9c2 5-2 8-6 7-3-1-1-4-3-5-4-2-8-1-10-1z" fill="#4bcf8f" />
            <path d="M14 23c-5 1-9-3-8-8 1-3 6-4 7-2-3 2-1 8 5 8z" fill="#fff" opacity="0.700" />
          </svg>
        </Task>
        <Task bar>
          <div className="w-[22px] h-[26px] rounded-[4px] bg-[#6dbb2c] flex items-center justify-center">
            <div className="w-[12px] h-[18px] border-l-[4px] border-y-[4px] border-white" />
          </div>
        </Task>
        <Task bar>
          <div className="w-[22px] h-[26px] rounded-[4px] bg-[#ee5a48] flex items-center justify-center">
            <div className="w-[12px] h-[18px] border-l-[4px] border-y-[4px] border-white" />
          </div>
        </Task>

        <div className="ml-auto flex items-center text-[#2e2e2e] text-[15px]">
          <svg width="18" height="12" viewBox="0 0 18 12" fill="none" stroke="#333" strokeWidth="1.500"><path d="M1 11l8-9 8 9" /></svg>
          <svg width="24" height="22" viewBox="0 0 24 22" fill="none" stroke="#444" strokeWidth="1.300" className="ml-[12px]">
            <path d="M2 8h3l5-5v16l-5-5H2z" />
            <path d="M13 8c1 2 1 4 0 6M16 5c2 4 2 8 0 12" />
            <path d="M19 3c3 5 3 11 0 16" stroke="#bbb" />
          </svg>
          <svg width="24" height="24" viewBox="0 0 24 24" fill="none" stroke="#333" strokeWidth="1.500" className="ml-[13px]">
            <path d="M14 2L5 18c-1 3 3 5 5 2L16 6c1-2 3-1 2 1l-3 4h7" />
          </svg>
          <span className="ml-[18px]">ENG</span>
          <span className="ml-[17px]">12:33</span>
          <svg width="24" height="24" viewBox="0 0 24 24" fill="none" stroke="#222" strokeWidth="1.300" className="ml-[24px] mr-[32px]">
            <path d="M2 2h20v18h-7l-3 3-3-3H2z" />
          </svg>
        </div>
      </div>
    </div>
  );
}
